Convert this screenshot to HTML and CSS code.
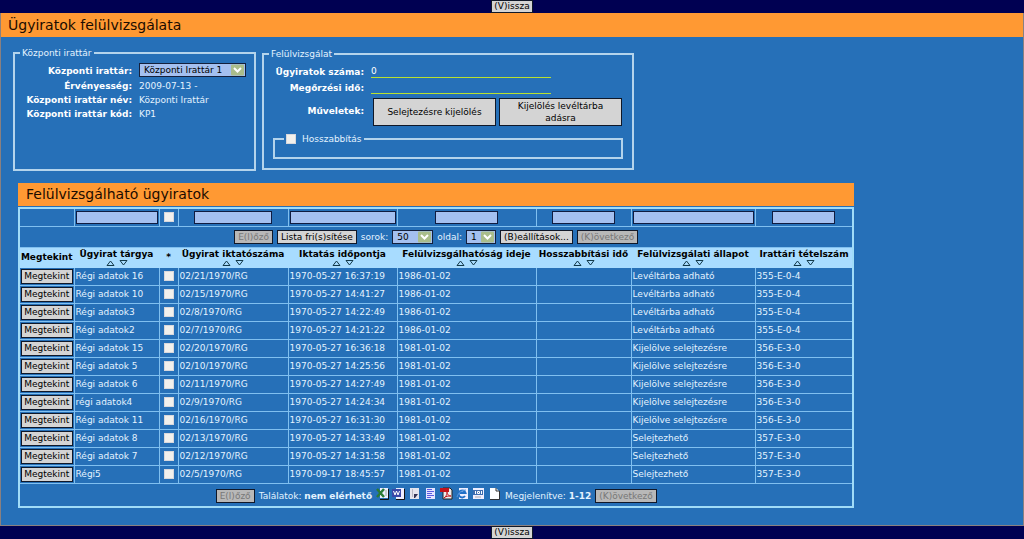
FILE: index.html
```html
<!DOCTYPE html>
<html lang="hu">
<head>
<meta charset="utf-8">
<title>Ügyiratok felülvizsgálata</title>
<link rel="stylesheet" href="styles.css">
</head>
<body>
<nav class="bar"><button class="btn">(V)issza</button></nav>
<main class="page">
  <h1 class="title">Ügyiratok felülvizsgálata</h1>
  <div class="content">
    <div class="forms">
      <fieldset class="box archive">
        <legend>Központi irattár</legend>
        <div class="fields">
          <label class="name" for="archive">Központi irattár:</label>
          <span class="pick wide"><select id="archive"><option>Központi Irattár 1</option></select><svg class="arrow" viewBox="0 0 13 11"><rect width="13" height="11" rx="1" fill="#a9bd8b"/><path d="M3 3.500l3.500 3.500 3.500-3.500" fill="none" stroke="#fff" stroke-width="2"/></svg></span>
          <span class="name">Érvényesség:</span><span>2009-07-13 -</span>
          <span class="name">Központi irattár név:</span><span>Központi Irattár</span>
          <span class="name">Központi irattár kód:</span><span>KP1</span>
        </div>
      </fieldset>
      <fieldset class="box review">
        <legend>Felülvizsgálat</legend>
        <div class="fields">
          <label class="name" for="count">Ügyiratok száma:</label><input class="line" id="count" value="0">
          <label class="name" for="keep">Megőrzési idő:</label><input class="line" id="keep">
          <span class="name">Műveletek:</span>
          <div class="actions"><button class="btn big">Selejtezésre kijelölés</button><button class="btn big">Kijelölés levéltárba adásra</button></div>
        </div>
        <fieldset class="box extend">
          <legend><input type="checkbox" class="tick" id="extend"><label for="extend">Hosszabbítás</label></legend>
        </fieldset>
      </fieldset>
    </div>
    <section class="list">
      <h2 class="title">Felülvizsgálható ügyiratok</h2>
      <table class="grid">
        <colgroup><col class="c1"><col class="c2"><col class="c3"><col class="c4"><col class="c5"><col class="c6"><col class="c7"><col class="c8"><col class="c9"></colgroup>
        <thead>
          <tr class="filters">
            <td></td>
            <td><input class="filter full" aria-label="Ügyirat tárgya"></td>
            <td><input type="checkbox" class="tick" aria-label="Mind"></td>
            <td><input class="filter mid" aria-label="Ügyirat iktatószáma"></td>
            <td><input class="filter full" aria-label="Iktatás időpontja"></td>
            <td><input class="filter" aria-label="Felülvizsgálhatóság ideje"></td>
            <td><input class="filter" aria-label="Hosszabbítási idő"></td>
            <td><input class="filter full" aria-label="Felülvizsgálati állapot"></td>
            <td><input class="filter" aria-label="Irattári tételszám"></td>
          </tr>
          <tr><td colspan="9"><div class="tools">
            <button class="btn" disabled>E(l)őző</button>
            <button class="btn">Lista fri(s)sítése</button>
            <label for="rows">sorok:</label>
            <span class="pick rows"><select id="rows"><option>50</option></select><svg class="arrow" viewBox="0 0 13 11"><rect width="13" height="11" rx="1" fill="#a9bd8b"/><path d="M3 3.500l3.500 3.500 3.500-3.500" fill="none" stroke="#fff" stroke-width="2"/></svg></span>
            <label for="pageno">oldal:</label>
            <span class="pick pageno"><select id="pageno"><option>1</option></select><svg class="arrow" viewBox="0 0 13 11"><rect width="13" height="11" rx="1" fill="#a9bd8b"/><path d="M3 3.500l3.500 3.500 3.500-3.500" fill="none" stroke="#fff" stroke-width="2"/></svg></span>
            <button class="btn">(B)eállítások...</button>
            <button class="btn" disabled>(K)övetkező</button>
          </div></td></tr>
          <tr class="heads" id="heads"></tr>
        </thead>
        <tbody id="records"></tbody>
        <tfoot><tr><td colspan="9"><div class="tools foot">
          <button class="btn" disabled>E(l)őző</button>
          <span>Találatok: <b>nem elérhető</b></span>
          <span class="icons">
            <svg viewBox="0 0 13 13"><path d="M4 1h8v10H4z" fill="#eef"/><path d="M12.500 2v10.500H4" fill="none" stroke="#111"/><path d="M9 4h2M9 6h2M9 8h2" stroke="#9ab09a"/><path d="M1 2l7 8M8 2L1 10" stroke="#2b7b35" stroke-width="2.500"/></svg>
            <svg viewBox="0 0 13 13"><path d="M4 1h8v11H4z" fill="#eef"/><path d="M12.500 2v10.500H4" fill="none" stroke="#111"/><path d="M0 2h9v8H0z" fill="#3b48a8"/><path d="M1.500 4l1.500 4 1.500-4L6 8l1.500-4" fill="none" stroke="#fff"/></svg>
            <svg viewBox="0 0 13 13"><path d="M2 1h9v11H2z" fill="#e5e5ee"/><path d="M4.500 2v8" stroke="#b8b8c4"/><path d="M6 7h4l-3 4H6z" fill="#335"/></svg>
            <svg viewBox="0 0 13 13"><path d="M2 1h9v11H2z" fill="#e4e4ff"/><path d="M3 2.500h5M3 4.500h7M3 6.500h5M3 8.500h7M3 10.500h4" stroke="#5a5ae0"/></svg>
            <svg viewBox="0 0 13 13"><path d="M3 1h7l2 2v9H3z" fill="#eee" stroke="#222"/><path d="M0 1h9v4H0z" fill="#c3141c"/><path d="M4 11c3-2 3-5 3-7 0 4 2 5 4 5-3 0-5 0-7 2z" fill="none" stroke="#c3141c"/></svg>
            <svg viewBox="0 0 13 13"><path d="M3 1h9v11H3z" fill="#eef"/><path d="M9 9a3.500 3.500 0 1 1 .5-3H4" fill="none" stroke="#2270c8" stroke-width="2"/><path d="M1 10C2 6 6 3 10 3" fill="none" stroke="#5a9ae0"/></svg>
            <svg viewBox="0 0 13 13"><path d="M1 1h11v11H1z" fill="#eef"/><path d="M1 3h10v5H1z" fill="#3e6eb0"/><path d="M3.500 4v3M5.500 4.500h2v2h-2zM9.500 4v3" fill="none" stroke="#fff"/><path d="M3 10h6" stroke="#aaa"/></svg>
            <svg viewBox="0 0 13 13"><path d="M2 1h6l3 3v8H2z" fill="#fff"/><path d="M8 1v3h3.500v8.500H2" fill="none" stroke="#333"/></svg>
          </span>
          <span>Megjelenítve: <b>1-12</b></span>
          <button class="btn" disabled>(K)övetkező</button>
        </div></td></tr></tfoot>
      </table>
    </section>
  </div>
</main>
<nav class="bar"><button class="btn">(V)issza</button></nav>
<script src="app.js"></script>
</body>
</html>
```
FILE: app.js
```javascript
const heads = ["Megtekint", "Ügyirat tárgya", "*", "Ügyirat iktatószáma", "Iktatás időpontja", "Felülvizsgálhatóság ideje", "Hosszabbítási idő", "Felülvizsgálati állapot", "Irattári tételszám"];
const sort = '<svg class="sort" viewBox="0 0 22 6"><path d="M1 5.500h7L4.500 1zM14 .5h7L17.500 5z" fill="none" stroke="#12394a"/></svg>';
document.getElementById("heads").innerHTML = heads.map(h =>
  `<th scope="col">${h}${h === "*" || h === "Megtekint" ? "" : sort}</th>`).join("");

const records = [
  ["Régi adatok 16", "21", "1970-05-27 16:37:19", 0],
  ["Régi adatok 10", "15", "1970-05-27 14:41:27", 0],
  ["Régi adatok3", "8", "1970-05-27 14:22:49", 0],
  ["Régi adatok2", "7", "1970-05-27 14:21:22", 0],
  ["Régi adatok 15", "20", "1970-05-27 16:36:18", 1],
  ["Régi adatok 5", "10", "1970-05-27 14:25:56", 1],
  ["Régi adatok 6", "11", "1970-05-27 14:27:49", 1],
  ["régi adatok4", "9", "1970-05-27 14:24:34", 1],
  ["Régi adatok 11", "16", "1970-05-27 16:31:30", 1],
  ["Régi adatok 8", "13", "1970-05-27 14:33:49", 2],
  ["Régi adatok 7", "12", "1970-05-27 14:31:58", 2],
  ["Régi5", "5", "1970-09-17 18:45:57", 2]
];
const states = [
  ["1986-01-02", "Levéltárba adható", "355-E-0-4"],
  ["1981-01-02", "Kijelölve selejtezésre", "356-E-3-0"],
  ["1981-01-02", "Selejtezhető", "357-E-3-0"]
];
document.getElementById("records").innerHTML = records.map(([name, no, time, s]) => {
  const [date, state, item] = states[s];
  return `<tr><td class="view"><button class="btn">Megtekint</button></td><td>${name}</td>` +
    `<td class="mark"><input type="checkbox" class="tick" aria-label="${name}"></td>` +
    `<td>02/${no}/1970/RG</td><td>${time}</td><td>${date}</td><td></td><td>${state}</td><td>${item}</td></tr>`;
}).join("");
```
FILE: styles.css
```css
* { box-sizing: border-box; }
body {
  margin: 0;
  min-height: 100vh;
  display: flex;
  flex-direction: column;
  background: #000052;
  color: #e4f3ff;
  font: 9px/14px Verdana, "DejaVu Sans", sans-serif;
}
button, input, select { font: inherit; margin: 0; border-radius: 0; }
.bar { flex: none; height: 13px; display: flex; justify-content: center; }
.btn {
  height: 14px;
  padding: 0 3px;
  border: 1px solid #101828;
  background: #d4d4d4;
  color: #000;
  line-height: 12px;
  white-space: nowrap;
}
.bar .btn { height: 13px; padding: 0 2px; line-height: 11px; }
.btn:disabled { background: #b8b8b8; color: #777; }
.page { flex: 1; border: 1px solid #8a8080; border-top: 0; background: #2670b8; }
.title {
  margin: 0;
  padding: 0 7px;
  background: #ff9933;
  color: #1c0c00;
  font-size: 14px;
  font-weight: normal;
  line-height: 24px;
}
.content { padding: 10px 26px 16px 12px; }
.forms { display: flex; align-items: flex-start; gap: 6px; }
.box { margin: 0; border: 2px solid #b4d4ec; min-width: 0; }
.box legend { padding: 0 2px; line-height: 12px; }
.archive { flex: 0 0 243px; min-height: 124px; padding: 4px 6px; }
.review { flex: 0 0 372px; padding: 4px 9px 9px; margin-top: 1px; }
.archive > legend { margin-left: -1px; }
.review > legend { margin-left: -4px; }
.fields { display: grid; align-items: center; column-gap: 7px; }
.archive .fields { grid-template-columns: 111px 1fr; }
.review .fields { grid-template-columns: 91px 1fr; }
.name { font-weight: bold; text-align: right; color: #fff; white-space: nowrap; }
.review .name { justify-self: end; }
.line {
  width: 180px;
  height: 14px;
  margin-bottom: 2px;
  padding: 0;
  border: 0;
  border-bottom: 1px solid #b8e030;
  background: transparent;
  color: #fff;
}
.actions { display: flex; gap: 3px; padding: 2px 0 0 2px; }
.btn.big { width: 123px; height: 28px; white-space: normal; padding: 0 6px; }
.extend { height: 26px; margin-top: 7px; padding: 0; }
.extend legend { display: flex; align-items: center; gap: 6px; margin-left: 9px; }
.tick { appearance: none; width: 10px; height: 10px; background: #f2f0ec; border: 1px solid #d8d8dc; display: block; }
.pick { position: relative; display: inline-flex; height: 14px; }
.pick select {
  appearance: none;
  width: 100%;
  height: 100%;
  padding: 0 4px;
  border: 1px solid #14203c;
  background: #a4c0f0;
  color: #000;
  line-height: 12px;
}
.wide { width: 107px; margin-bottom: 2px; }
.rows { width: 41px; }
.pageno { width: 30px; }
.arrow { position: absolute; right: 2px; top: 1px; width: 13px; height: 12px; pointer-events: none; }
.list { width: 85%; min-width: 820px; margin: 12px 0 0 5px; }
.list .title { margin-bottom: 1px; line-height: 23px; padding: 0 8px; }
.grid { width: 100%; table-layout: fixed; border-collapse: collapse; border: 2px solid #a0dcf8; }
.grid td, .grid th { padding: 0 1px; border: 1px solid #80c0f0; height: 18px; white-space: nowrap; }
.c1 { width: 55px; } .c2 { width: 85px; } .c3 { width: 19px; } .c4 { width: 110px; }
.c5 { width: 109px; } .c6 { width: 139px; } .c7 { width: 95px; } .c8 { width: 124px; }
.filter { display: block; width: 63px; height: 13px; margin: 0 auto; border: 1px solid #101c40; background: #a4c0f0; }
.full { width: 100%; }
.mid { width: 78px; }
.filters .tick, .mark .tick { margin: 0 auto; }
.grid .heads th { background: #a8dcff; color: #000; border-color: #a8dcff; line-height: 12px; height: 20px; padding: 0; }
.sort { display: block; width: 22px; height: 6px; margin: 0 auto; }
.view .btn { display: block; width: 100%; height: 15px; padding: 0; }
.tools { display: flex; justify-content: center; align-items: center; gap: 4px; height: 20px; }
.foot { height: 22px; padding-top: 2px; }
.icons { display: flex; gap: 3px; margin-bottom: 5px; }
.icons svg { width: 13px; height: 13px; }
```
